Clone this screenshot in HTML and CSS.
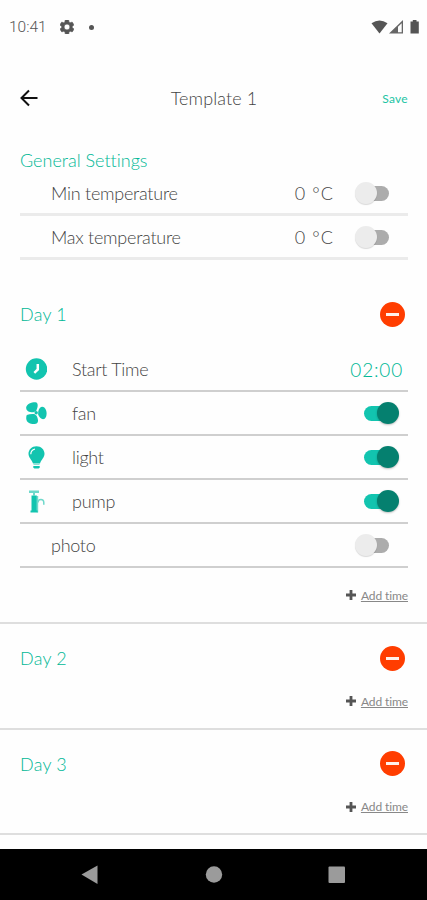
FILE: index.html
```html
<!DOCTYPE html>
<html lang="en">
<head>
  <meta charset="UTF-8" />
  <meta name="viewport" content="width=device-width, initial-scale=1.0"/>
  <title>Template 1</title>
  <link rel="stylesheet" href="styles.css">
</head>
<body>
  <div class="statusbar">
    <span class="clock">10:41</span>
    <svg class="gear" width="14" height="14" viewBox="2 2 20 20"><path fill="#555" stroke="#555" stroke-width="1" fill-rule="evenodd" d="M19.4 13a7.500 7.500 0 0 0 0-2l2.100-1.600a.5.5 0 0 0 .1-.7l-2-3.400a.5.5 0 0 0-.6-.2l-2.500 1a7 7 0 0 0-1.700-1l-.4-2.600a.5.5 0 0 0-.5-.5h-4a.5.5 0 0 0-.5.5L9 5.100a7 7 0 0 0-1.700 1l-2.500-1a.5.5 0 0 0-.6.2l-2 3.400a.5.5 0 0 0 .1.700L4.500 11a7.500 7.500 0 0 0 0 2l-2.100 1.600a.5.5 0 0 0-.1.700l2 3.400c.1.200.4.300.6.200l2.500-1a7 7 0 0 0 1.700 1l.4 2.600c0 .3.200.5.500.5h4c.3 0 .5-.2.500-.5l.4-2.600a7 7 0 0 0 1.700-1l2.500 1c.2.100.5 0 .6-.2l2-3.400a.5.5 0 0 0-.1-.7zM12 16.200a4.200 4.200 0 1 1 0-8.400 4.200 4.200 0 0 1 0 8.400z"/></svg>
    <span class="dot"></span>
    <svg class="signals" width="50" height="16" viewBox="0 0 50 16">
      <path fill="#555" d="M0.500 4.300Q8.500-1.500 16.500 4.300L8.500 14.500z"/>
      <path fill="#666" fill-rule="evenodd" d="M18 14.500L32 1v13.500zM27 13.300h3.700V4.200L27 7.700z"/>
      <path fill="#555" d="M39.500 2.500h2.300V1h3.700v1.500h2.300v12h-8.300z"/>
    </svg>
  </div>

  <header class="header">
    <svg class="back" width="18" height="18" viewBox="0 0 18 18"><path d="M17.500 9H1.500M9 1.500L1.500 9L9 16.500" fill="none" stroke="#111" stroke-width="2"/></svg>
    <h1>Template 1</h1>
    <a class="save">Save</a>
  </header>

  <section class="general">
    <h2 class="general-title">General Settings</h2>
    <div class="row">
      <span class="label">Min temperature</span>
      <span class="value">0 °C</span>
      <span class="switch"></span>
    </div>
    <div class="row">
      <span class="label">Max temperature</span>
      <span class="value">0 °C</span>
      <span class="switch"></span>
    </div>
  </section>

  <section class="day first">
    <div class="day-head"><h2>Day 1</h2><span class="remove"></span></div>
    <div class="rows">
      <div class="row">
        <svg class="icon" width="22" height="22" viewBox="0 0 22 22"><circle cx="11.500" cy="11" r="10.700" fill="#12c4af"/><path d="M12.800 6v5.500L9.300 14.800" fill="none" stroke="#fff" stroke-width="2.500"/></svg>
        <span class="label">Start Time</span>
        <span class="time">02:00</span>
      </div>
      <div class="row">
        <svg class="icon" width="22" height="22" viewBox="0 0 22 22" fill="#12c4af">
          <path d="M1.200 5.500C1.500 1.800 7 .1 10.500.3c3 .4 2.600 4.400.7 8.600L8.500 10.300C4.500 10.500 1 9 1.200 5.500z"/>
          <path d="M13.300 9.200C14 5.500 17 3.500 19.300 5.500c3 2.700 3 9 .4 11.200-2.500 1.500-5.400-.8-6.600-4.200z"/>
          <path d="M1.800 13c2.200-1 5-1.300 7.500-1l2.300 1.700c1.500 2.900 2.500 7-.6 8.100-3.800 1-9.200-.5-9.700-4.600-.2-1.700 0-3.200.5-4.200z"/>
          <circle cx="11.200" cy="10.700" r="1.700"/>
        </svg>
        <span class="label">fan</span>
        <span class="switch on"></span>
      </div>
      <div class="row">
        <svg class="icon" width="22" height="23" viewBox="0 0 22 23">
          <path fill="#12c4af" d="M11.500.2c4.600 0 8 3.400 8 7.600 0 3.800-3.200 5.800-4.500 9.700H8C6.700 13.600 3.500 11.600 3.500 7.800 3.500 3.600 6.900.2 11.500.2zM8.300 20h6.400v1.700l-1.200.8h-4l-1.200-.8z"/>
          <path fill="#8be0d5" d="M8.500 17.500h6V19h-6z"/>
          <path d="M5.800 8.300C5.800 5.600 7.500 3.600 10 3" fill="none" stroke="#fff" stroke-width="1.200"/>
        </svg>
        <span class="label">light</span>
        <span class="switch on"></span>
      </div>
      <div class="row">
        <svg class="icon" width="22" height="23" viewBox="0 0 22 23">
          <path fill="#6fd9cb" d="M4 .5h10v2.400H4zM8 2.900h2v2.500H8zM11.800 6h1.400v16.500h-1.400z"/>
          <path fill="#12c4af" d="M6.500 5.500h5.300v15h.8v2H5.500v-2h1z"/>
          <path d="M13 12.500c0-4 5.800-4.300 5.800 0v2.300" fill="none" stroke="#6fd9cb" stroke-width="1.500"/>
        </svg>
        <span class="label">pump</span>
        <span class="switch on"></span>
      </div>
      <div class="row">
        <span class="label photo">photo</span>
        <span class="switch"></span>
      </div>
    </div>
    <div class="add"><svg width="10" height="10" viewBox="0 0 10 10"><path d="M5 0v10M0 5h10" stroke="#555" stroke-width="2.800"/></svg><a>Add time</a></div>
  </section>

  <section class="day">
    <div class="day-head"><h2>Day 2</h2><span class="remove"></span></div>
    <div class="add"><svg width="10" height="10" viewBox="0 0 10 10"><path d="M5 0v10M0 5h10" stroke="#555" stroke-width="2.800"/></svg><a>Add time</a></div>
  </section>

  <section class="day">
    <div class="day-head"><h2>Day 3</h2><span class="remove"></span></div>
    <div class="add"><svg width="10" height="10" viewBox="0 0 10 10"><path d="M5 0v10M0 5h10" stroke="#555" stroke-width="2.800"/></svg><a>Add time</a></div>
  </section>

  <nav class="navbar">
    <svg width="427" height="51" viewBox="0 0 427 51" fill="#9b9b9b">
      <path d="M81.500 25.500L97.500 16.500v18.500z"/>
      <circle cx="214" cy="25.500" r="8.200"/>
      <rect x="328.500" y="17.500" width="16.500" height="16.500" rx="1"/>
    </svg>
  </nav>
</body>
</html>
```
FILE: styles.css
```css
body {
  margin: 0;
  height: 900px;
  overflow: hidden;
  display: flex;
  flex-direction: column;
  background-color: #fefefe;
  color: #444;
  font-family: Lato, sans-serif;
  font-size: 18px;
  font-weight: 300;
  font-variant-ligatures: none;
}
h1, h2 {
  margin: 0;
  font-size: 18px;
  font-weight: 300;
}
.statusbar {
  display: flex;
  align-items: center;
  height: 54px;
  padding: 0 6px 0 9px;
}
.clock {
  width: 51px;
  font-family: Roboto, sans-serif;
  font-size: 15.500px;
  color: #555;
}
.dot {
  width: 5px;
  height: 5px;
  margin-left: 15px;
  border-radius: 50%;
  background-color: #555;
}
.signals {
  margin-left: auto;
}
.header {
  display: grid;
  grid-template-columns: 60px 1fr 60px;
  align-items: center;
  height: 88px;
  padding: 0 19px 0 20px;
}
.header h1 {
  text-align: center;
  letter-spacing: 0.1px;
}
.save {
  text-align: right;
  font-size: 12px;
  font-weight: 400;
  letter-spacing: 0.3px;
  color: #1cc4a4;
}
.general {
  height: 118px;
  padding: 8px 19px 0 20px;
}
.general-title, .day h2 {
  color: #00b896;
}
.general-title {
  height: 22px;
  line-height: 20px;
}
.day h2 {
  letter-spacing: 0.2px;
}
.row {
  display: flex;
  align-items: center;
  box-sizing: border-box;
  height: 44px;
  border-bottom: 2px solid #cfcfcf;
}
.general .row {
  border-bottom: 3px solid #ebebeb;
}
.general .label, .photo {
  margin-left: 31px;
}
.general .label {
  letter-spacing: -0.25px;
}
.day .label {
  letter-spacing: -0.3px;
}
.icon {
  width: 22px;
  margin-left: 5px;
  margin-right: 25px;
}
.value {
  margin-left: auto;
  margin-right: 21px;
  letter-spacing: 1.100px;
}
.time {
  margin-left: auto;
  margin-right: 5px;
  font-size: 19px;
  letter-spacing: 0.8px;
  color: #00b896;
}
/* switches: track plus overlapping knob */
.switch {
  position: relative;
  width: 34px;
  height: 15px;
  margin-top: 1px;
  margin-right: 19px;
  border-radius: 8px;
  background: linear-gradient(to right, transparent 12px, #acacac 12px);
}
.switch::before {
  content: "";
  position: absolute;
  left: 0;
  top: -4px;
  width: 22px;
  height: 22px;
  border-radius: 50%;
  background-color: #ececec;
  box-shadow: 0 1px 1px rgba(0,0,0,0.15);
}
.day .switch {
  margin-left: auto;
}
.switch.on {
  margin-right: 10px;
  background: linear-gradient(to right, #12c4af 24px, transparent 24px);
}
.switch.on::before {
  left: 13px;
  background-color: #05806f;
  box-shadow: 0 1px 2px rgba(0,0,0,0.25);
}
.day {
  box-sizing: border-box;
  height: 105.500px;
  padding: 20px 19px 0 20px;
  border-bottom: 2px solid #dedede;
}
.day.first {
  height: 356px;
  padding-top: 32px;
}
.day-head {
  display: flex;
  align-items: center;
  justify-content: space-between;
  height: 28px;
}
.remove {
  display: flex;
  align-items: center;
  justify-content: center;
  width: 25px;
  height: 25px;
  margin-right: 3px;
  border-radius: 50%;
  background-color: #ff3d00;
}
.remove::before {
  content: "";
  width: 13px;
  height: 3px;
  background-color: #fff0ea;
}
.rows {
  padding-top: 20px;
}
.add {
  display: flex;
  align-items: center;
  justify-content: flex-end;
  gap: 5px;
  height: 18px;
  margin-top: 20px;
  font-size: 12px;
}
.first .add {
  margin-top: 18px;
}
.add a {
  font-weight: 400;
  letter-spacing: -0.1px;
  color: #888;
  text-decoration: underline;
}
.navbar {
  flex-shrink: 0;
  height: 51px;
  margin-top: auto;
  background-color: #000;
}
```
